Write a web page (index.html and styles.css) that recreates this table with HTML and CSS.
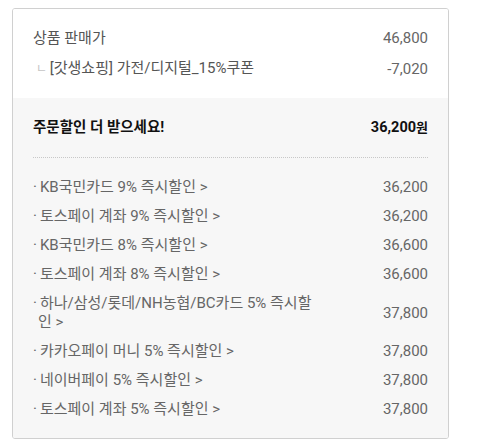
FILE: index.html
```html
<!DOCTYPE html>
<html lang="ko">
<head>
<meta charset="utf-8">
<link rel="stylesheet" href="styles.css">
</head>
<body>
<div class="box">
  <div class="top">
    <div class="row"><span class="label">상품 판매가</span><span class="num">46,800</span></div>
    <div class="row"><span class="label"><span class="corner">ㄴ</span> [갓생쇼핑] 가전/디지털_15%쿠폰</span><span class="num">-7,020</span></div>
  </div>
  <div class="bottom">
    <div class="row title"><span>주문할인 더 받으세요!</span><span class="total">36,200<span class="won">원</span></span></div>
    <div class="divider"></div>
    <ul class="list">
      <li class="item"><span class="name"><span class="dot">·</span>KB국민카드 9% 즉시할인 &gt;</span><span class="num">36,200</span></li>
      <li class="item"><span class="name"><span class="dot">·</span>토스페이 계좌 9% 즉시할인 &gt;</span><span class="num">36,200</span></li>
      <li class="item"><span class="name"><span class="dot">·</span>KB국민카드 8% 즉시할인 &gt;</span><span class="num">36,600</span></li>
      <li class="item"><span class="name"><span class="dot">·</span>토스페이 계좌 8% 즉시할인 &gt;</span><span class="num">36,600</span></li>
      <li class="item"><span class="name"><span class="dot">·</span>하나/삼성/롯데/NH농협/BC카드 5% 즉시할인 &gt;</span><span class="num">37,800</span></li>
      <li class="item"><span class="name"><span class="dot">·</span>카카오페이 머니 5% 즉시할인 &gt;</span><span class="num">37,800</span></li>
      <li class="item"><span class="name"><span class="dot">·</span>네이버페이 5% 즉시할인 &gt;</span><span class="num">37,800</span></li>
      <li class="item"><span class="name"><span class="dot">·</span>토스페이 계좌 5% 즉시할인 &gt;</span><span class="num">37,800</span></li>
    </ul>
  </div>
</div>
</body>
</html>
```
FILE: styles.css
```css
html, body {
  margin: 0;
  padding: 0;
  background: #fff;
}
body {
  padding: 8px 0 0 12px;
  font-family: Roboto, "Noto Sans CJK KR", sans-serif;
  font-size: 15px;
  line-height: 20px;
  color: #555;
}
.box {
  width: 435px;
  border: 1px solid #d0d0d0;
  border-radius: 3px;
  overflow: hidden;
}
.top {
  padding: 19px 20px 19px 20px;
  display: flex;
  flex-direction: column;
  gap: 10px;
  background: #fff;
}
.row {
  display: flex;
  justify-content: space-between;
  align-items: center;
}
.corner {
  color: #c4c4c4;
  font-size: 12px;
  margin-left: 3px;
  margin-right: -1px;
}
.num {
  color: #666;
}
.bottom {
  background: #f7f7f7;
  padding: 20px 20px 19px 20px;
}
.title {
  font-weight: 700;
  font-size: 14.5px;
  color: #111;
}
.won {
  font-size: 13px;
}
.divider {
  border-top: 1px dotted #c8c8c8;
  margin: 19px 0 20px;
}
.list {
  list-style: none;
  margin: 0;
  padding: 0;
  display: flex;
  flex-direction: column;
  gap: 10px;
  line-height: 19px;
}
.item {
  display: flex;
  justify-content: space-between;
  align-items: center;
  color: #666;
}
.name {
  max-width: 280px;
  padding-left: 5px;
  text-indent: -5px;
}
.dot {
  margin-right: 3px;
}
```
